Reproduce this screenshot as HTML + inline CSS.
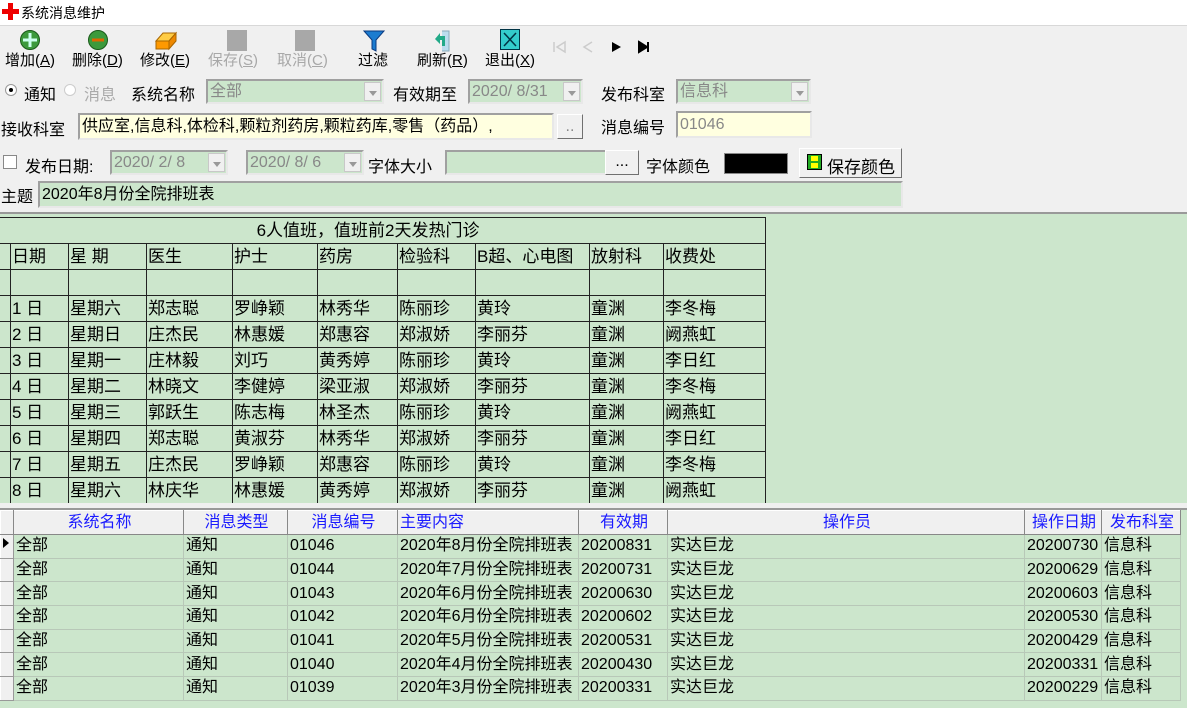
<!DOCTYPE html>
<html><head><meta charset="utf-8">
<style>
*{box-sizing:border-box;margin:0;padding:0}
body{width:1187px;height:708px;overflow:hidden;background:#f0f0f0;font-family:"Liberation Sans","Noto Sans CJK SC",sans-serif;font-size:16px;color:#000;position:relative}
.a{position:absolute;white-space:nowrap}
.g{background:#cce6cc}
.in{position:absolute;border:2px solid #a0a0a0;border-right-color:#e8e8e8;border-bottom-color:#e8e8e8;background:#cce6cc;color:#888;font-size:16px;line-height:21px;padding-left:2px;white-space:nowrap;overflow:hidden}
.dd{position:absolute;top:1px;right:1px;width:17px;bottom:1px;background:#f0f0f0;border:1px solid #c8c8c8}
.dd:after{content:"";position:absolute;left:4px;top:8px;border:4px solid transparent;border-top:5px solid #999}
.tb{position:absolute;top:49px;font-size:15px}
.btn{position:absolute;background:#f0f0f0;border:1px solid #fff;border-right-color:#707070;border-bottom-color:#707070}
table{border-collapse:collapse;table-layout:fixed}
#memo td{border:1px solid #222;height:26px;padding:0 0 0 1px;font-size:17px;white-space:nowrap;overflow:hidden;line-height:24px}
#grid td{border:1px solid #b8c8b8;height:23.7px;padding:0 0 0 2px;font-size:16px;white-space:nowrap;overflow:hidden;line-height:22px}
#grid tr.h td{background:#f0f0f0;color:#1a1aff;border:1px solid #888;border-top-color:#fff;border-left-color:#fff;text-align:center;height:24px}
#grid td.ind{background:#f0f0f0;border:1px solid #999;border-top-color:#fff;border-left-color:#fff;padding:0}
</style></head><body>
<div class="a" style="left:0;top:0;width:1187px;height:26px;background:#fff;border-bottom:1px solid #d8d8d8"></div>
<div class="a" style="left:2px;top:9px;width:17px;height:5px;background:#e00"></div>
<div class="a" style="left:8px;top:3px;width:5px;height:17px;background:#e00"></div>
<div class="a" style="left:21px;top:3px;font-size:14px">系统消息维护</div>

<!-- toolbar -->
<svg class="a" style="left:19px;top:29px" width="22" height="22"><circle cx="11" cy="11" r="9.5" fill="#3c9a3c" stroke="#1a5a1a"/><path d="M11 4v14M4 11h14" stroke="#cfe" stroke-width="3"/></svg>
<svg class="a" style="left:87px;top:29px" width="22" height="22"><circle cx="11" cy="11" r="9.5" fill="#3c9a3c" stroke="#1a5a1a"/><path d="M5 11h12" stroke="#d60" stroke-width="3"/></svg>
<svg class="a" style="left:154px;top:31px" width="24" height="20"><path d="M2 10l7-8h13l-7 8z" fill="#fc4" stroke="#a60"/><path d="M2 10h13v8H2z" fill="#f90" stroke="#a60"/><path d="M15 10l7-8v8l-7 8z" fill="#e80" stroke="#a60"/></svg>
<div class="a" style="left:227px;top:30px;width:20px;height:21px;background:#a8a8a8"></div>
<div class="a" style="left:295px;top:30px;width:20px;height:21px;background:#a8a8a8"></div>
<svg class="a" style="left:363px;top:30px" width="22" height="22"><path d="M1 1h20l-8 9v11l-4-2V10z" fill="#1c7cd0" stroke="#0a3a80"/></svg>
<svg class="a" style="left:431px;top:29px" width="22" height="24"><path d="M11 2h7v20h-7" fill="#bde" stroke="#8ab"/><path d="M4 10l5-6v3h5v10h-3v-6H9v4z" fill="#2a8"/></svg>
<div class="a" style="left:500px;top:29px;width:20px;height:21px;background:#3cc;border:1px solid #034"><svg width="18" height="19"><path d="M3 3l12 13M15 3L3 16" stroke="#034" stroke-width="1.5"/></svg></div>
<div class="tb" style="left:5px">增加(<u>A</u>)</div>
<div class="tb" style="left:72px">删除(<u>D</u>)</div>
<div class="tb" style="left:140px">修改(<u>E</u>)</div>
<div class="tb" style="left:208px;color:#a8a8a8">保存(<u>S</u>)</div>
<div class="tb" style="left:277px;color:#a8a8a8">取消(<u>C</u>)</div>
<div class="tb" style="left:358px">过滤</div>
<div class="tb" style="left:417px">刷新(<u>R</u>)</div>
<div class="tb" style="left:485px">退出(<u>X</u>)</div>
<svg class="a" style="left:552px;top:40px" width="110" height="14"><path d="M2 2v10M13 2L5 7l8 5z" fill="none" stroke="#ccc" stroke-width="1.5"/><path d="M40 2l-8 5 8 5" fill="none" stroke="#ccc" stroke-width="1.5"/><path d="M60 2l9 5-9 5z" fill="#000"/><path d="M87 2l8 5-8 5zM96 2v10" fill="#000" stroke="#000" stroke-width="2"/></svg>

<!-- row1 -->
<div class="a" style="left:5px;top:84px;width:12px;height:12px;border-radius:50%;background:#fff;border:1px solid #999"><div style="position:absolute;left:3px;top:3px;width:4px;height:4px;border-radius:50%;background:#000"></div></div>
<div class="a" style="left:24px;top:81px">通知</div>
<div class="a" style="left:64px;top:84px;width:12px;height:12px;border-radius:50%;background:#fff;border:1px solid #ccc"></div>
<div class="a" style="left:84px;top:81px;color:#aaa">消息</div>
<div class="a" style="left:131px;top:81px">系统名称</div>
<div class="in" style="left:206px;top:79px;width:178px;height:25px">全部<div class="dd"></div></div>
<div class="a" style="left:393px;top:81px">有效期至</div>
<div class="in" style="left:468px;top:79px;width:115px;height:25px">2020/ 8/31<div class="dd"></div></div>
<div class="a" style="left:601px;top:81px">发布科室</div>
<div class="in" style="left:676px;top:79px;width:135px;height:25px">信息科<div class="dd"></div></div>
<!-- row2 -->
<div class="a" style="left:1px;top:116px">接收科室</div>
<div class="in" style="left:78px;top:113px;width:476px;height:27px;background:#ffffe0;color:#000;line-height:23px">供应室,信息科,体检科,颗粒剂药房,颗粒药库,零售（药品）,</div>
<div class="btn" style="left:557px;top:114px;width:26px;height:25px;color:#888;text-align:center;line-height:24px">..</div>
<div class="a" style="left:601px;top:114px">消息编号</div>
<div class="in" style="left:676px;top:111px;width:136px;height:27px;background:#ffffe0;line-height:23px">01046</div>
<!-- row3 -->
<div class="a" style="left:3px;top:155px;width:14px;height:14px;background:#fff;border:1px solid #888"></div>
<div class="a" style="left:25px;top:153px">发布日期:</div>
<div class="in" style="left:110px;top:150px;width:118px;height:25px">2020/ 2/ 8<div class="dd"></div></div>
<div class="in" style="left:246px;top:150px;width:118px;height:25px">2020/ 8/ 6<div class="dd"></div></div>
<div class="a" style="left:368px;top:153px">字体大小</div>
<div class="in" style="left:445px;top:150px;width:162px;height:25px"></div>
<div class="btn" style="left:605px;top:150px;width:34px;height:25px;text-align:center;line-height:22px">...</div>
<div class="a" style="left:646px;top:153px">字体颜色</div>
<div class="a" style="left:724px;top:153px;width:64px;height:21px;background:#000;border:1px solid #888"></div>
<div class="btn" style="left:799px;top:148px;width:103px;height:30px"></div>
<div class="a" style="left:807px;top:154px;width:15px;height:16px;background:#2a2;border:1px solid #000"><div style="position:absolute;left:3px;top:1px;width:7px;height:5px;background:#ff0"></div><div style="position:absolute;left:3px;top:8px;width:7px;height:5px;background:#ff0"></div></div>
<div class="a" style="left:827px;top:153px;font-size:17px">保存颜色</div>
<!-- row4 -->
<div class="a" style="left:1px;top:183px">主题</div>
<div class="in" style="left:38px;top:181px;width:865px;height:27px;color:#000;line-height:23px">2020年8月份全院排班表</div>

<!-- memo -->
<div class="a g" style="left:0;top:212px;width:1187px;height:291px;border-top:2px solid #999"></div>
<table id="memo" class="a" style="left:-1px;top:217px;width:766px">
<colgroup><col style="width:11px"><col style="width:58px"><col style="width:78px"><col style="width:86px"><col style="width:85px"><col style="width:80px"><col style="width:78px"><col style="width:114px"><col style="width:74px"><col style="width:102px"></colgroup>
<tr><td colspan="10" style="text-align:center;padding-right:30px">6人值班，值班前2天发热门诊</td></tr>
<tr><td></td><td>日期</td><td>星 期</td><td>医生</td><td>护士</td><td>药房</td><td>检验科</td><td>B超、心电图</td><td>放射科</td><td>收费处</td></tr>
<tr><td></td><td></td><td></td><td></td><td></td><td></td><td></td><td></td><td></td><td></td></tr>
<tr><td></td><td>1 日</td><td>星期六</td><td>郑志聪</td><td>罗峥颖</td><td>林秀华</td><td>陈丽珍</td><td>黄玲</td><td>童渊</td><td>李冬梅</td></tr>
<tr><td></td><td>2 日</td><td>星期日</td><td>庄杰民</td><td>林惠媛</td><td>郑惠容</td><td>郑淑娇</td><td>李丽芬</td><td>童渊</td><td>阙燕虹</td></tr>
<tr><td></td><td>3 日</td><td>星期一</td><td>庄林毅</td><td>刘巧</td><td>黄秀婷</td><td>陈丽珍</td><td>黄玲</td><td>童渊</td><td>李日红</td></tr>
<tr><td></td><td>4 日</td><td>星期二</td><td>林晓文</td><td>李健婷</td><td>梁亚淑</td><td>郑淑娇</td><td>李丽芬</td><td>童渊</td><td>李冬梅</td></tr>
<tr><td></td><td>5 日</td><td>星期三</td><td>郭跃生</td><td>陈志梅</td><td>林圣杰</td><td>陈丽珍</td><td>黄玲</td><td>童渊</td><td>阙燕虹</td></tr>
<tr><td></td><td>6 日</td><td>星期四</td><td>郑志聪</td><td>黄淑芬</td><td>林秀华</td><td>郑淑娇</td><td>李丽芬</td><td>童渊</td><td>李日红</td></tr>
<tr><td></td><td>7 日</td><td>星期五</td><td>庄杰民</td><td>罗峥颖</td><td>郑惠容</td><td>陈丽珍</td><td>黄玲</td><td>童渊</td><td>李冬梅</td></tr>
<tr><td></td><td>8 日</td><td>星期六</td><td>林庆华</td><td>林惠媛</td><td>黄秀婷</td><td>郑淑娇</td><td>李丽芬</td><td>童渊</td><td>阙燕虹</td></tr>
</table>
<div class="a" style="left:0;top:503px;width:1187px;height:5px;background:#f0f0f0"></div>

<!-- grid -->
<div class="a g" style="left:0;top:508px;width:1187px;height:200px;border-top:2px solid #999"></div>
<table id="grid" class="a" style="left:0;top:510px;width:1180px">
<colgroup><col style="width:13px"><col style="width:170px"><col style="width:104px"><col style="width:110px"><col style="width:181px"><col style="width:89px"><col style="width:357px"><col style="width:77px"><col style="width:79px"></colgroup>
<tr class="h"><td class="ind"></td><td>系统名称</td><td>消息类型</td><td>消息编号</td><td style="text-align:left">主要内容</td><td>有效期</td><td>操作员</td><td>操作日期</td><td>发布科室</td></tr>
<tr><td class="ind"><svg width="10" height="14"><path d="M2 2l6 5-6 5z" fill="#000"/></svg></td><td>全部</td><td>通知</td><td>01046</td><td>2020年8月份全院排班表</td><td>20200831</td><td>实达巨龙</td><td>20200730</td><td>信息科</td></tr>
<tr><td class="ind"></td><td>全部</td><td>通知</td><td>01044</td><td>2020年7月份全院排班表</td><td>20200731</td><td>实达巨龙</td><td>20200629</td><td>信息科</td></tr>
<tr><td class="ind"></td><td>全部</td><td>通知</td><td>01043</td><td>2020年6月份全院排班表</td><td>20200630</td><td>实达巨龙</td><td>20200603</td><td>信息科</td></tr>
<tr><td class="ind"></td><td>全部</td><td>通知</td><td>01042</td><td>2020年6月份全院排班表</td><td>20200602</td><td>实达巨龙</td><td>20200530</td><td>信息科</td></tr>
<tr><td class="ind"></td><td>全部</td><td>通知</td><td>01041</td><td>2020年5月份全院排班表</td><td>20200531</td><td>实达巨龙</td><td>20200429</td><td>信息科</td></tr>
<tr><td class="ind"></td><td>全部</td><td>通知</td><td>01040</td><td>2020年4月份全院排班表</td><td>20200430</td><td>实达巨龙</td><td>20200331</td><td>信息科</td></tr>
<tr><td class="ind"></td><td>全部</td><td>通知</td><td>01039</td><td>2020年3月份全院排班表</td><td>20200331</td><td>实达巨龙</td><td>20200229</td><td>信息科</td></tr>
</table>
</body></html>
